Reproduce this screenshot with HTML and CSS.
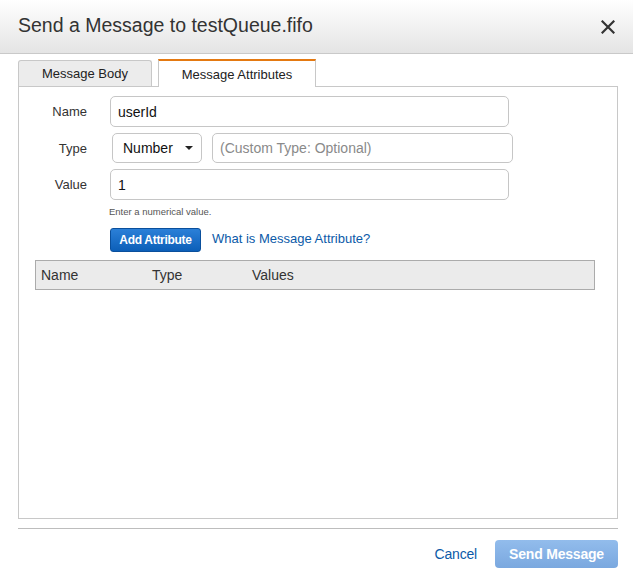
FILE: index.html
```html
<!DOCTYPE html>
<html>
<head>
<meta charset="utf-8">
<link rel="stylesheet" href="styles.css">
</head>
<body>
<div class="dialog">
  <div class="header">
    <h1 class="title">Send a Message to testQueue.fifo</h1>
    <span class="close">
      <svg width="14" height="14" viewBox="0 0 14 14"><path d="M1.5 1.5 L12.5 12.5 M12.5 1.5 L1.5 12.5" stroke="#333" stroke-width="2.2" stroke-linecap="square"/></svg>
    </span>
  </div>
  <div class="body">
    <div class="tabs">
      <div class="tab">Message Body</div>
      <div class="tab active">Message Attributes</div>
    </div>
    <div class="panel">
      <div class="form">
        <div class="row">
          <label class="label">Name</label>
          <div class="input name-input">userId</div>
        </div>
        <div class="row">
          <label class="label">Type</label>
          <div class="select">Number <span class="caret"></span></div>
          <div class="input custom-input placeholder">(Custom Type: Optional)</div>
        </div>
        <div class="row">
          <label class="label">Value</label>
          <div class="input name-input">1</div>
        </div>
        <div class="hint">Enter a numerical value.</div>
        <div class="actions">
          <button class="btn-primary">Add Attribute</button>
          <a class="link">What is Message Attribute?</a>
        </div>
      </div>
      <div class="table-head">
        <span class="col col-name">Name</span>
        <span class="col col-type">Type</span>
        <span class="col col-values">Values</span>
      </div>
    </div>
    <div class="divider"></div>
    <div class="footer">
      <a class="cancel">Cancel</a>
      <button class="btn-send">Send Message</button>
    </div>
  </div>
</div>
</body>
</html>
```

FILE: styles.css
```css
html, body {
  margin: 0;
  padding: 0;
  background: #fff;
}
body {
  font-family: "Liberation Sans", Arial, sans-serif;
  color: #333;
}
.dialog {
  width: 633px;
  height: 575px;
}
.header {
  height: 53px;
  border-bottom: 1px solid #c9c9c9;
  background: linear-gradient(#ffffff, #e4e4e4);
  display: flex;
  align-items: center;
  justify-content: space-between;
  padding: 0 18px 0 18px;
}
.title {
  margin: 0;
  font-size: 19.5px;
  font-weight: normal;
  color: #333;
  position: relative;
  top: -1px;
}
.close {
  display: flex;
  width: 14px;
  height: 14px;
}
.body {
  padding: 0 15px 0 18px;
}
.tabs {
  display: flex;
  align-items: flex-end;
  gap: 6px;
  margin-top: 4px;
  height: 28px;
  position: relative;
  z-index: 1;
}
.tab {
  box-sizing: border-box;
  height: 26px;
  width: 134px;
  border: 1px solid #c8c8c8;
  border-bottom: none;
  border-radius: 3px 3px 0 0;
  background: #ececec;
  font-size: 13px;
  color: #222;
  display: flex;
  align-items: center;
  justify-content: center;
}
.tab.active {
  width: 158px;
  height: 28px;
  background: #fff;
  border-top: 2px solid #e47911;
  border-radius: 0;
  padding-top: 1px;
  margin-bottom: -1px;
}
.panel {
  box-sizing: border-box;
  height: 433px;
  border: 1px solid #c8c8c8;
}
.form {
  padding-top: 9px;
}
.row {
  display: flex;
  align-items: center;
  margin-bottom: 6px;
}
.label {
  width: 68px;
  margin-right: 23px;
  text-align: right;
  font-size: 13px;
  color: #333;
}
.input {
  box-sizing: border-box;
  height: 31px;
  border: 1px solid #c6c6c6;
  border-radius: 5px;
  font-size: 14px;
  color: #111;
  padding: 0 7px;
  display: flex;
  align-items: center;
  background: #fff;
}
.name-input {
  width: 399px;
}
.select {
  box-sizing: border-box;
  width: 90px;
  height: 30px;
  margin-left: 2px;
  border: 1px solid #c6c6c6;
  border-radius: 5px;
  font-size: 14px;
  color: #111;
  padding: 0 0 0 10px;
  display: flex;
  align-items: center;
}
.caret {
  display: inline-block;
  width: 0;
  height: 0;
  border-left: 4px solid transparent;
  border-right: 4px solid transparent;
  border-top: 4px solid #222;
  margin-left: 12px;
}
.custom-input {
  width: 301px;
  height: 30px;
  margin-left: 10px;
}
.placeholder {
  color: #8a8a8a;
}
.hint {
  font-size: 9.5px;
  color: #555;
  padding-left: 90px;
  margin-top: 6px;
}
.actions {
  display: flex;
  align-items: center;
  padding-left: 91px;
  margin-top: 11px;
}
.btn-primary {
  box-sizing: border-box;
  width: 91px;
  height: 24px;
  border: 1px solid #0a4f9c;
  border-radius: 3px;
  background: linear-gradient(#2b80d8, #0c5fb8);
  color: #fff;
  font-family: "Liberation Sans", Arial, sans-serif;
  font-weight: bold;
  font-size: 12px;
  letter-spacing: -0.3px;
  padding: 0;
}
.link {
  margin-left: 11px;
  font-size: 13px;
  color: #0b5aa8;
  position: relative;
  top: -2px;
}
.table-head {
  box-sizing: border-box;
  margin: 8px 22px 0 16px;
  height: 30px;
  border: 1px solid #ababab;
  background: #ebebeb;
  display: flex;
  align-items: center;
  font-size: 14px;
  color: #333;
}
.col-name {
  width: 111px;
  padding-left: 5px;
}
.col-type {
  width: 100px;
}
.divider {
  height: 1px;
  background: #bdbdbd;
  margin-top: 9px;
}
.footer {
  display: flex;
  justify-content: flex-end;
  align-items: center;
  margin-top: 11px;
}
.cancel {
  font-size: 14px;
  color: #0b5aa8;
  margin-right: 18px;
  letter-spacing: -0.2px;
}
.btn-send {
  box-sizing: border-box;
  width: 123px;
  height: 28px;
  border: none;
  border-radius: 4px;
  background: linear-gradient(#92bcec, #7aa8df);
  color: #fff;
  font-family: "Liberation Sans", Arial, sans-serif;
  font-weight: bold;
  font-size: 14px;
  letter-spacing: -0.2px;
  padding: 0;
}
```
